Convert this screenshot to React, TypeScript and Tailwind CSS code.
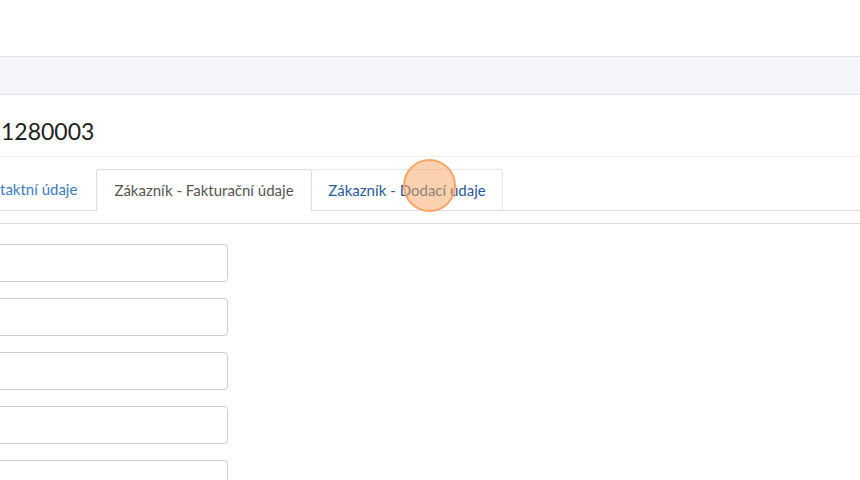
export default function App() {
  const font = { fontFamily: "Lato, 'Noto Sans', sans-serif" };
  return (
    <div className="relative w-[860px] h-[480px] overflow-hidden bg-white" style={font}>
      {/* top bar */}
      <div className="h-[56px] bg-white" />
      <div className="h-[39px] bg-[#f5f6fa] border-y border-[#e1e3e8]" />

      {/* heading */}
      <div className="h-[62px] flex items-center border-b border-[#efefef]">
        <h1 className="text-[23px] text-[#222] leading-none pl-px pt-[12px]">1280003</h1>
      </div>

      {/* tabs */}
      <div className="mt-[12px] flex border-b border-[#dddddd] h-[42px]">
        <div className="w-[96px] h-[41px] flex items-center">
          <span className="text-[15px] text-[#3b7cc2] leading-none">taktní údaje</span>
        </div>
        <div className="w-[216px] h-[42px] -mb-px bg-white border-t border-x border-[#dddddd] rounded-t-[3px] flex items-center justify-center">
          <span className="text-[15px] text-[#555] leading-none">Zákazník - Fakturační údaje</span>
        </div>
        <div className="w-[191px] h-[41px] border-t border-r border-[#e6e6e6] rounded-t-[3px] flex items-center justify-center">
          <span className="text-[15px] text-[#2b5a96] leading-none">Zákazník - Dodací údaje</span>
        </div>
      </div>
      <div className="mt-[12px] border-b border-[#dddddd]" />

      {/* form */}
      <div className="mt-[20px] flex flex-col gap-[16px]">
        {[0, 1, 2, 3, 4].map(i => (
          <div key={i} className="-ml-[10px] w-[238px] h-[38px] rounded-[4px] border border-[#cccccc] bg-white" />
        ))}
      </div>

      {/* click indicator */}
      <div className="absolute left-[403px] top-[159px] w-[53px] h-[53px] rounded-full bg-[#f7a35f]/50 border-2 border-[#f3a261]/90" />
    </div>
  );
}
